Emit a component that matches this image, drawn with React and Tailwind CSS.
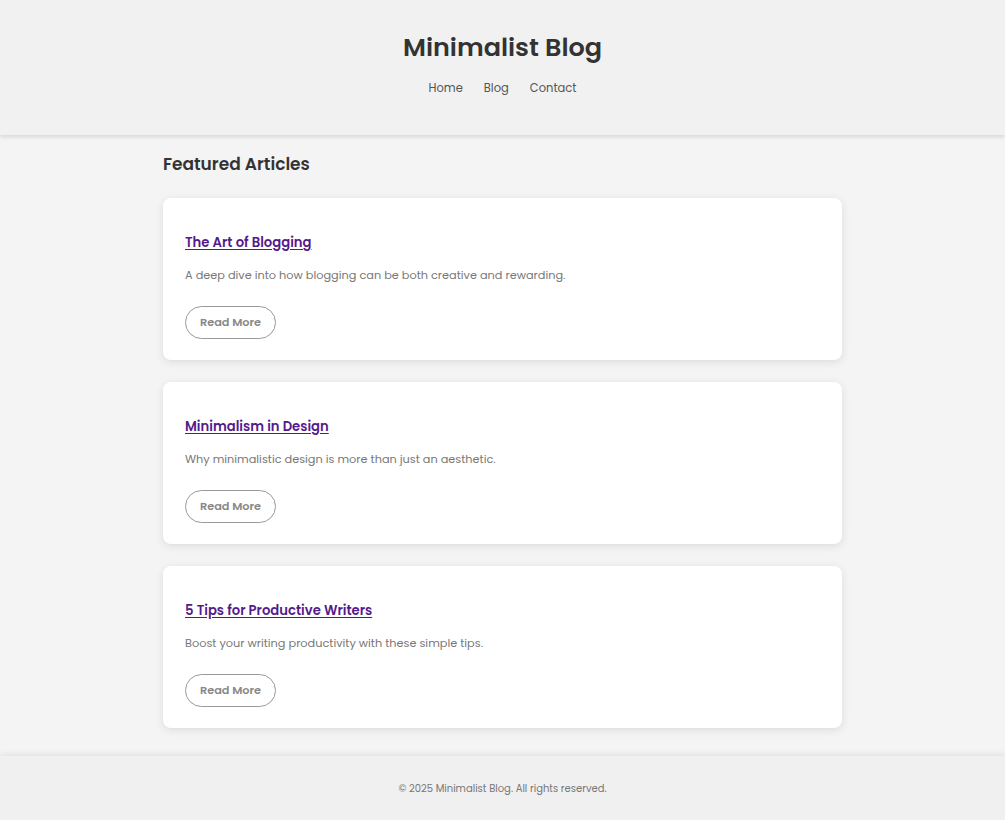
import React from "react";

const articles = [
  { title: "The Art of Blogging", desc: "A deep dive into how blogging can be both creative and rewarding." },
  { title: "Minimalism in Design", desc: "Why minimalistic design is more than just an aesthetic." },
  { title: "5 Tips for Productive Writers", desc: "Boost your writing productivity with these simple tips." },
];

export default function App() {
  return (
    <div className="min-h-screen bg-[#f4f4f4] font-['Poppins','Inter',sans-serif] text-[#333]">
      <header className="relative z-10 h-[135px] bg-[#f1f1f1] shadow-[0_2px_4px_rgba(0,0,0,0.12)] flex flex-col items-center pt-[30px]">
        <h1 className="text-[25.5px] leading-[34px] font-semibold text-[#333]">Minimalist Blog</h1>
        <nav className="mt-[14px] flex gap-[21px] text-[11.5px] leading-[20px] text-[#555]">
          <a>Home</a>
          <a>Blog</a>
          <a>Contact</a>
        </nav>
      </header>
      <main className="mx-auto w-[679px] pt-[16px] pb-[28px]">
        <h2 className="text-[17px] leading-[26px] font-semibold text-[#333]">Featured Articles</h2>
        <div className="mt-[21px] flex flex-col gap-[22px]">
          {articles.map((a) => (
            <article key={a.title} className="h-[162px] bg-white rounded-[8px] shadow-[0_2px_8px_rgba(0,0,0,0.1)] px-[22px] pt-[35px]">
              <h3 className="text-[13.2px] leading-[20px] font-semibold text-[#551a8b] underline underline-offset-2">{a.title}</h3>
              <p className="mt-[12px] text-[11.3px] leading-[20px] text-[#777]">{a.desc}</p>
              <button className="mt-[21px] w-[91px] h-[33px] rounded-full border border-[#999] text-[11.3px] font-semibold text-[#888]">Read More</button>
            </article>
          ))}
        </div>
      </main>
      <footer className="h-[64px] bg-[#f0f0f0] shadow-[0_-2px_6px_rgba(0,0,0,0.08)] flex items-center justify-center">
        <p className="text-[10px] text-[#777]">© 2025 Minimalist Blog. All rights reserved.</p>
      </footer>
    </div>
  );
}
